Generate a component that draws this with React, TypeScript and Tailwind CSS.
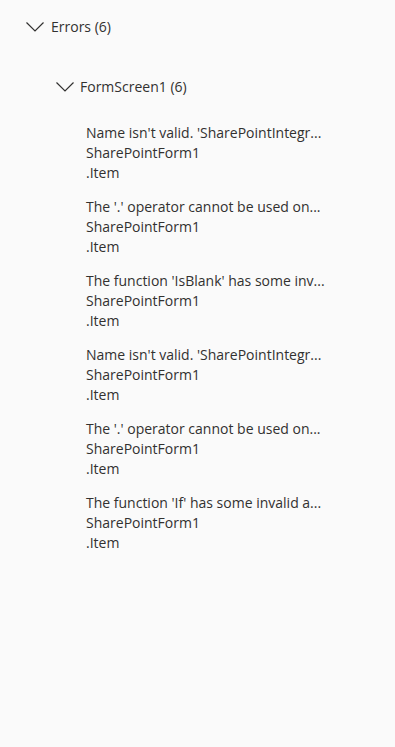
import React from "react";

const errors = [
  "Name isn't valid. 'SharePointIntegr...",
  "The '.' operator cannot be used on...",
  "The function 'IsBlank' has some inv...",
  "Name isn't valid. 'SharePointIntegr...",
  "The '.' operator cannot be used on...",
  "The function 'If' has some invalid a...",
];

function Chevron() {
  return (
    <svg width="20" height="12" viewBox="0 0 20 12" fill="none" className="shrink-0">
      <path d="M1.5 1.5 L10 10 L18.5 1.5" stroke="#323130" strokeWidth="1.2" />
    </svg>
  );
}

export default function App() {
  return (
    <div
      className="min-h-[747px] w-[395px] bg-[#fafafa] text-[14px] leading-[20px] text-[#323130]"
      style={{ fontFamily: '"Segoe UI", "Open Sans", "Liberation Sans", sans-serif' }}
    >
      <div className="flex flex-col pt-[17px]">
        <div className="flex h-[20px] items-center gap-[6px] pl-[25px]">
          <Chevron />
          <span>Errors (6)</span>
        </div>

        <div className="mt-[40px] flex h-[20px] items-center gap-[5px] pl-[55px]">
          <Chevron />
          <span>FormScreen1 (6)</span>
        </div>

        <ul className="mt-[26px] flex flex-col gap-[14px] pl-[86px]">
          {errors.map((e, i) => (
            <li key={i} className="flex flex-col">
              <span className="whitespace-nowrap">{e}</span>
              <span>SharePointForm1</span>
              <span>.Item</span>
            </li>
          ))}
        </ul>
      </div>
    </div>
  );
}
